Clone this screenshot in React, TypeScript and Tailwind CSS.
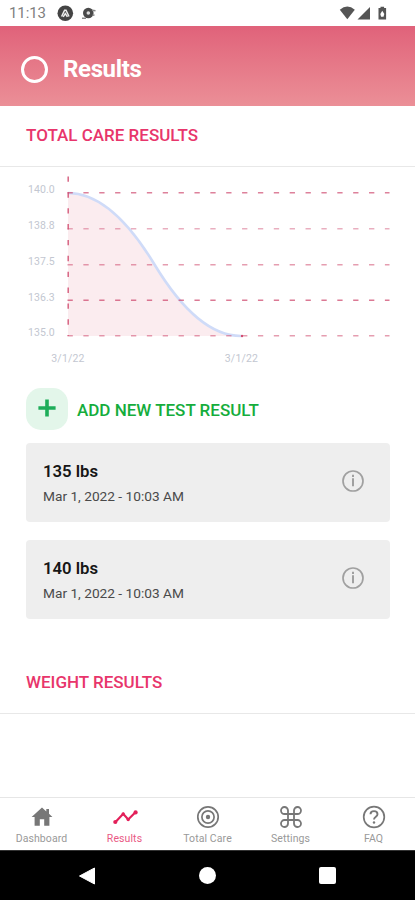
import React from "react";

const GRID = [
  { y: 25.7, label: "140.0", o: 0.7 },
  { y: 61.7, label: "138.8", o: 0.45 },
  { y: 97.7, label: "137.5", o: 0.55 },
  { y: 133.2, label: "136.3", o: 0.75 },
  { y: 168.7, label: "135.0", o: 0.55 },
];

function StatusBar() {
  return (
    <div className="flex h-[26px] items-center bg-white pl-[9px] pr-[28px] pt-px text-[#808080]">
      <span className="w-[48px] text-[15px] leading-none tracking-[-0.1px]">11:13</span>
      <svg width="17" height="17" viewBox="0 0 17 17">
        <circle cx="8.3" cy="8.3" r="7.8" fill="#444" />
        <path d="M4.6 11.5 L7.6 5.2 H9 L12 11.5 M6.2 11.8 L8.3 8.7 L10.4 11.8" fill="none" stroke="#eee" strokeWidth="1.5" />
      </svg>
      <svg className="ml-[7px]" width="16" height="13" viewBox="0 0 16 13">
        <circle cx="7.3" cy="6" r="5.3" fill="#4a4a4a" />
        <circle cx="7.3" cy="6" r="1.8" fill="#ddd" />
        <path d="M1 11.3h4M11 3.2l3.5.6M11.5 8.2l2-.2" stroke="#888" strokeWidth="1.4" />
      </svg>
      <div className="flex-1" />
      <svg width="48" height="15" viewBox="0 0 48 15" fill="#555">
        <path d="M.8 3.7Q8.3-2.5 15.8 3.7L8.3 13.2Z" />
        <path d="M31 1V13.5H18.5Z" />
        <path d="M39.5 2h2V.7h3.6V2h2V13.5h-7.6Z" />
        <path d="M43.3 4.8l2 3.2-.8 2.8h-2.4l-.8-2.8Z" fill="#fff" />
      </svg>
    </div>
  );
}

function SectionTitle({ children }: { children: React.ReactNode }) {
  return (
    <h2 className="flex h-[61px] items-center border-b border-[#e8e8e8] pl-[26px] text-[17px] font-medium text-[#e8356b]">
      {children}
    </h2>
  );
}

function Chart() {
  return (
    <svg className="block" width="415" height="221" viewBox="0 0 415 221">
      <path d="M68 26Q111.25 26 154.5 97.5Q197.75 169 241 169H68Z" fill="#fbecef" />
      <path d="M68 26Q111.25 26 154.5 97.5Q197.75 169 241 169" fill="none" stroke="#cfdbf8" strokeWidth="2.6" />
      {GRID.map((g) => (
        <g key={g.label}>
          <path d={`M67.5 ${g.y}H389.5`} stroke="#cf4c70" strokeOpacity={g.o} strokeWidth="1.4" strokeDasharray="5.3 10.57" />
          <text x="28" y={g.y + 0.3} fontSize="10.5" letterSpacing=".1" fill="#c3c7d1">
            {g.label}
          </text>
        </g>
      ))}
      <path d="M68.2 9.5V169" stroke="#d04b70" strokeOpacity=".85" strokeWidth="1.5" strokeDasharray="5.3 10.57" />
      <circle cx="242" cy="169" r="1.2" fill="#d04b70" />
      <text x="68" y="194.5" fontSize="10.5" letterSpacing=".2" textAnchor="middle" fill="#c3c7d1">3/1/22</text>
      <text x="241.5" y="194.5" fontSize="10.5" letterSpacing=".2" textAnchor="middle" fill="#c3c7d1">3/1/22</text>
    </svg>
  );
}

function ResultCard({ value }: { value: string }) {
  return (
    <div className="flex h-[79px] items-center justify-between rounded-[4px] bg-[#eeeeee] pl-[17px] pr-[25px]">
      <div>
        <div className="mt-[3px] text-[16.7px] font-semibold leading-[20px] text-[#161616]">{value}</div>
        <div className="mt-[5px] pb-px text-[13.7px] leading-[18px] text-[#4a4a4a]">Mar 1, 2022 - 10:03 AM</div>
      </div>
      <svg className="mb-[3px]" width="24" height="24" viewBox="0 0 24 24" fill="none" stroke="#a0a0a0">
        <circle cx="12" cy="12" r="10" strokeWidth="1.7" />
        <path d="M12 9.3v8M12 5.8v2.2" strokeWidth="2" />
      </svg>
    </div>
  );
}

function Tab({ label, active, children }: { label: string; active?: boolean; children: React.ReactNode }) {
  return (
    <div className={`flex w-[83px] flex-col items-center ${active ? "text-[#e3205a]" : "text-[#777777]"}`}>
      <svg width="26" height="26" viewBox="0 0 26 26" fill="none" stroke="currentColor" strokeWidth="1.7">
        {children}
      </svg>
      <span className="mt-[2px] text-[10.5px] leading-[14px] tracking-[0.1px] opacity-75">{label}</span>
    </div>
  );
}

export default function App() {
  return (
    <div className="flex h-[900px] w-[415px] flex-col overflow-hidden bg-white font-['Roboto',sans-serif]">
      <StatusBar />
      <header className="flex h-[80px] items-center bg-linear-to-b from-[#e0627a] to-[#eb8f97] pl-[21px] pt-[6px]">
        <div className="size-[27px] rounded-full border-[3.5px] border-white" />
        <h1 className="ml-[15px] text-[24px] font-bold leading-none tracking-[-0.35px] text-white">Results</h1>
      </header>
      <SectionTitle>TOTAL CARE RESULTS</SectionTitle>
      <Chart />
      <div className="flex h-[42px] items-center pl-[26px]">
        <div className="flex size-[42px] items-center justify-center rounded-[15px] bg-[#e3f6ea]">
          <svg className="mb-[2px]" width="18" height="18" viewBox="0 0 18 18">
            <path d="M9 .4v17.2M.4 9h17.2" stroke="#1dad59" strokeWidth="3.6" />
          </svg>
        </div>
        <span className="ml-[9px] mt-[4px] text-[17px] font-medium text-[#15ad3c]">ADD NEW TEST RESULT</span>
      </div>
      <div className="mt-[13px] flex flex-col gap-[18px] pl-[26px] pr-[25px]">
        <ResultCard value="135 lbs" />
        <ResultCard value="140 lbs" />
      </div>
      <div className="mt-[34px]">
        <SectionTitle>WEIGHT RESULTS</SectionTitle>
      </div>
      <div className="flex-1" />
      <nav className="flex h-[53px] border-t border-[#e6e6e6] bg-white pt-[6px]">
        <Tab label="Dashboard">
          <path d="M13 3.6L2.6 13h3v8.8h5.2v-6.5h4.4v6.5h5.2V13h3L20 9.8V5h-2.7v2.4Z" fill="currentColor" stroke="none" />
        </Tab>
        <Tab label="Results" active>
          <path d="M3.5 18L11.2 9.8L16.2 15.5L23.5 8.3" strokeWidth="2.2" />
          <g fill="currentColor" stroke="none">
            <circle cx="3.3" cy="18" r="2.1" />
            <circle cx="11.2" cy="10" r="1.7" />
            <circle cx="16.2" cy="15.6" r="1.7" />
            <circle cx="23.6" cy="8.4" r="2.1" />
          </g>
        </Tab>
        <Tab label="Total Care">
          <circle cx="13" cy="13" r="10.2" />
          <circle cx="13" cy="13" r="6.1" />
          <circle cx="13" cy="13" r="2.2" fill="currentColor" stroke="none" />
        </Tab>
        <Tab label="Settings">
          <path d="M10 10V6.4A3.5 3.5 0 1 0 6.5 10H19.5A3.5 3.5 0 1 0 16 6.4V19.6A3.5 3.5 0 1 0 19.5 16H6.5A3.5 3.5 0 1 0 10 19.6Z" strokeWidth="1.8" />
        </Tab>
        <Tab label="FAQ">
          <circle cx="13" cy="13" r="10.3" />
          <path d="M9.5 10.2C9.5 6.1 16.5 6.1 16.5 10.2C16.5 12.8 13 12.6 13 15.6" strokeWidth="1.9" />
          <circle cx="13" cy="18.5" r="1.2" fill="currentColor" stroke="none" />
        </Tab>
      </nav>
      <div className="flex h-[50px] items-center justify-between border-t border-[#333] bg-black pl-[78px] pr-[79px]">
        <svg width="18" height="18" viewBox="0 0 18 18">
          <path d="M1.5 9L16.5 1V17Z" fill="#fff" stroke="#fff" strokeLinejoin="round" />
        </svg>
        <div className="size-[17px] rounded-full bg-white" />
        <div className="size-[17px] rounded-[2px] bg-white" />
      </div>
    </div>
  );
}
